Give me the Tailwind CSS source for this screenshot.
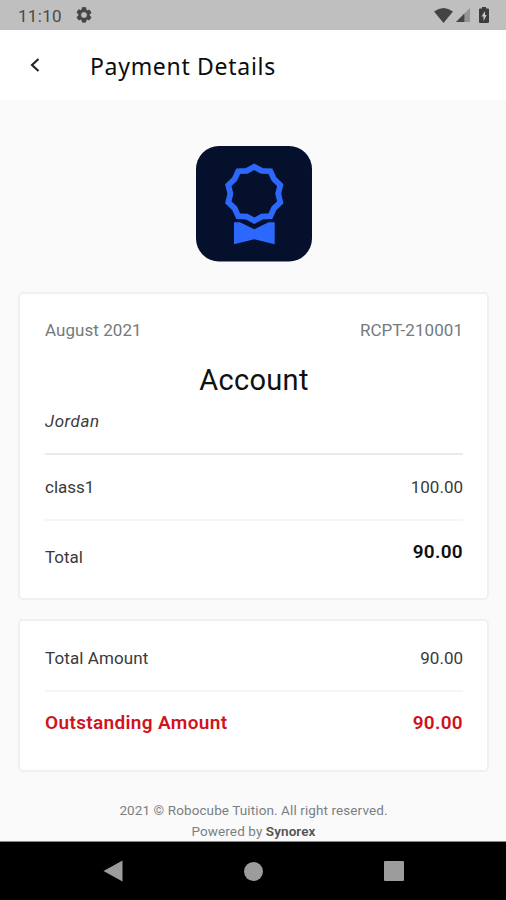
<!DOCTYPE html>
<html lang="en">
<head>
<meta charset="utf-8">
<title>Payment Details</title>
<script src="https://cdn.jsdelivr.net/npm/@tailwindcss/browser@4"></script>
</head>
<body class="flex h-[900px] w-[506px] flex-col overflow-hidden bg-[#fafafa] font-['Roboto',sans-serif] text-[#3a3a3a]">
<div class="flex h-[30px] shrink-0 items-center bg-[#bfbfbf] pl-[18px] pr-[17px] text-[#4a4a4a]">
  <span class="pt-px text-[17px] leading-5 tracking-[0.3px]">11:10</span>
  <svg class="ml-[13px] size-[18px]" viewBox="0 0 24 24" fill="#444" stroke="#444"><path d="M19.14 12.94c.04-.3.06-.61.06-.94s-.02-.64-.07-.94l2.03-1.58a.5.5 0 0 0 .12-.61l-1.92-3.32a.49.49 0 0 0-.59-.22l-2.39.96a7 7 0 0 0-1.62-.94l-.36-2.54A.48.48 0 0 0 13.92 2h-3.84a.47.47 0 0 0-.47.41l-.36 2.54c-.59.24-1.13.57-1.62.94l-2.39-.96a.48.48 0 0 0-.59.22L2.74 8.47a.47.47 0 0 0 .12.61l2.03 1.58a6.6 6.6 0 0 0 0 2.28l-2.03 1.58a.5.5 0 0 0-.12.61l1.92 3.32c.12.22.37.29.59.22l2.39-.96c.5.38 1.03.7 1.62.94l.36 2.54c.05.24.24.41.48.41h3.84c.24 0 .44-.17.47-.41l.36-2.54c.59-.24 1.13-.56 1.62-.94l2.39.96c.22.08.47 0 .59-.22l1.92-3.32a.47.47 0 0 0-.12-.61zM12 16.4a4.400 4.400 0 1 1 0-8.800 4.400 4.400 0 0 1 0 8.800"/></svg>
  <svg class="ml-auto h-[15px] w-[19px]" viewBox="0 0 19 15" fill="#444"><path d="M0 3.500Q9.500-3.500 19 3.500L9.500 15Z"/></svg>
  <svg class="ml-[3px] size-[14px]" viewBox="0 0 15 15"><path fill="#959595" d="M15 0V15H0Z"/><path fill="#444" d="M9 6V15H0Z"/></svg>
  <svg class="ml-[9px] h-[16px] w-[10px]" viewBox="0 0 10 16"><path fill="#3c3c3c" d="M3 0h4v1.500h2q1 0 1 1V15q0 1-1 1H1q-1 0-1-1V2.500q0-1 1-1h2z"/><path fill="#c8c8c8" d="M6 4 2.500 9.500h2V14L7.700 8H6z"/></svg>
</div>
<header class="flex h-[70px] shrink-0 items-center bg-white pl-[29px]">
  <svg class="mb-px h-[16px] w-[12px]" viewBox="0 0 12 16" fill="none" stroke="#222" stroke-width="2.100"><path d="M9.500 2 3 8l6.500 6"/></svg>
  <h1 class="ml-[49px] mt-px font-['Noto_Sans',sans-serif] text-[23px] leading-8 font-normal tracking-[0.7px] text-[#0c0c0c]">Payment Details</h1>
</header>
<main class="flex flex-1 flex-col items-center pl-[18px] pr-[17px] pt-[46px]">
  <svg class="ml-px h-[116px] w-[116px] shrink-0" viewBox="0 0 116 116">
    <rect width="116" height="115.500" rx="23" fill="#05102d"/>
    <path fill="none" stroke="#2c68fb" stroke-width="5.800" d="M58.300 20.800 65.800 24.800 74.400 25.200 78 33.100 84.300 39.200 82.200 47.700 84.300 56.300 78 62.300 74.400 70.200 65.800 70.600 58.300 74.800 50.800 70.600 42.200 70.200 38.600 62.300 32.300 56.300 34.400 47.700 32.300 39.200 38.600 33.100 42.200 25.200 50.800 24.800Z"/>
    <path fill="#2c68fb" d="M38 76.300h6L58.300 83.300 72.500 76.300h6.200V98.300L58.300 93.300 38 98.300Z"/>
  </svg>
  <section class="mt-[30px] flex h-[308px] w-full shrink-0 flex-col rounded-[5px] border-2 border-[#f0f0f0] bg-white pl-[25px] pr-[24px] text-[17px] leading-5">
    <div class="mt-[26px] flex justify-between text-[#757a7d]"><span class="tracking-[0.05px]">August 2021</span><span class="tracking-[0.05px]">RCPT-210001</span></div>
    <h2 class="mt-[20px] text-center text-[29px] leading-10 tracking-[0.3px] text-[#111]">Account</h2>
    <div class="mt-[11px] italic tracking-[0.55px]">Jordan</div>
    <div class="mt-[22px] flex h-[68px] items-center justify-between border-y-2 border-t-[#ebebeb] border-b-[#f5f5f5] pb-px"><span>class1</span><span>100.00</span></div>
    <div class="mt-[21px] flex justify-between"><span class="mt-[5px]">Total</span><span class="text-[19px] font-semibold tracking-[0.3px] text-[#111]">90.00</span></div>
  </section>
  <section class="mt-[19px] flex h-[153px] w-full shrink-0 flex-col rounded-[5px] border-2 border-[#f0f0f0] bg-white pl-[25px] pr-[24px] text-[17px] leading-5">
    <div class="mt-[27px] flex justify-between"><span class="tracking-[0.1px]">Total Amount</span><span>90.00</span></div>
    <div class="mt-[22px] flex justify-between border-t-2 border-[#f5f5f5] pt-[21px] text-[19px] font-semibold text-[#d0131d]"><span class="tracking-[0.35px]">Outstanding Amount</span><span class="tracking-[0.3px]">90.00</span></div>
  </section>
  <footer class="mt-[28px] h-[41px] text-center text-[13.5px] leading-[21px] tracking-[0.1px] text-[#7b7f82]"><p>2021 © Robocube Tuition. All right reserved.</p><p>Powered by <b class="font-semibold text-[#505558]">Synorex</b></p></footer>
</main>
<nav class="flex h-[59px] shrink-0 items-center justify-between border-t border-[#888] bg-black pl-[103px] pr-[102px]">
  <svg class="h-[22px] w-[20px]" viewBox="0 0 20 22" fill="#9c9c9c"><path d="M.5 11 19.500.5v21z"/></svg>
  <div class="size-[19px] rounded-full bg-[#9c9c9c]"></div>
  <div class="size-[20px] rounded-[1px] bg-[#9c9c9c]"></div>
</nav>
</body>
</html>
